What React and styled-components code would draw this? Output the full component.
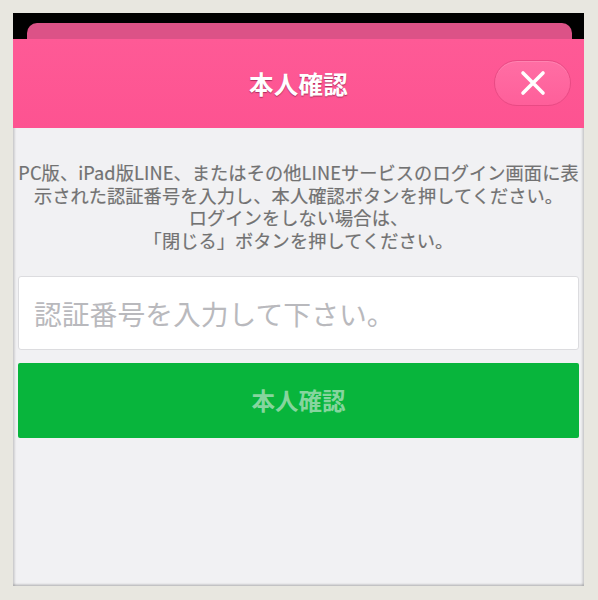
import styled, { createGlobalStyle } from "styled-components";

const Global = createGlobalStyle`
  html, body {
    margin: 0;
    padding: 0;
    background: #e8e7e0;
  }
  body {
    font-family: "Noto Sans CJK JP", "Noto Sans", Roboto, sans-serif;
  }
`;

const Page = styled.div`
  width: 598px;
  height: 600px;
  padding: 13px 14px 14px 13px;
  box-sizing: border-box;
`;

const Frame = styled.div`
  height: 573px;
  background: #f1f1f3;
  display: flex;
  flex-direction: column;
  box-shadow: inset 2px 0 2px rgba(0, 0, 0, 0.12), inset -2px 0 2px rgba(0, 0, 0, 0.12),
    inset 0 -2px 2px rgba(0, 0, 0, 0.14);
  overflow: hidden;
`;

const TopStrip = styled.div`
  background: #000;
  height: 26px;
  padding: 10px 12px 0 14px;
  box-sizing: border-box;
  display: flex;
`;

const BackCard = styled.div`
  flex: 1;
  background: #dc5287;
  border-radius: 10px 10px 0 0;
`;

const Header = styled.div`
  height: 89px;
  background: linear-gradient(#fe5a96, #fd5391);
  display: flex;
  align-items: center;
  justify-content: center;
  position: relative;
`;

const Title = styled.h1`
  margin: 0;
  font-size: 24.5px;
  font-weight: 700;
  color: #fff;
  letter-spacing: 0.3px;
  text-shadow: 0 1px 1px rgba(120, 20, 60, 0.6);
`;

const Close = styled.button`
  position: absolute;
  right: 13px;
  top: 21px;
  width: 77px;
  height: 46px;
  border-radius: 23px;
  border: 1px solid #e94a84;
  background: linear-gradient(#ff6ea4, #fe5f9a);
  box-shadow: inset 0 1px 0 rgba(255, 255, 255, 0.15);
  display: flex;
  align-items: center;
  justify-content: center;
  padding: 0;
`;

const Body = styled.div`
  padding: 33px 3px 0;
  display: flex;
  flex-direction: column;
`;

const Message = styled.p`
  margin: 0 0 24px;
  text-align: center;
  font-size: 18.2px;
  line-height: 22.7px;
  color: #727272;
  letter-spacing: 0.1px;
  -webkit-text-stroke: 0.2px #727272;
`;

const Field = styled.input`
  height: 74px;
  box-sizing: border-box;
  margin: 0 2px 13px;
  border: 1px solid #dcdcdf;
  border-radius: 3px;
  background: #fff;
  padding: 0 0 0 15px;
  font-family: inherit;
  font-size: 27.8px;
  outline: none;
  &::placeholder {
    color: #b9b9bd;
  }
`;

const Submit = styled.button`
  height: 75px;
  margin: 0 2px;
  border: none;
  border-radius: 2px;
  background: #08b53c;
  color: #86d59e;
  font-family: inherit;
  font-size: 23.5px;
  font-weight: 700;
`;

const App = () => {
  return (
    <Page>
      <Global />
      <Frame>
        <TopStrip>
          <BackCard />
        </TopStrip>
        <Header>
          <Title>本人確認</Title>
          <Close aria-label="閉じる">
            <svg width="26" height="26" viewBox="0 0 26 26">
              <path d="M3 3 L23 23 M23 3 L3 23" stroke="#fff" strokeWidth="3.6" strokeLinecap="round" />
            </svg>
          </Close>
        </Header>
        <Body>
          <Message>
            PC版、iPad版LINE、またはその他LINEサービスのログイン画面に表
            <br />
            示された認証番号を入力し、本人確認ボタンを押してください。
            <br />
            ログインをしない場合は、
            <br />
            「閉じる」ボタンを押してください。
          </Message>
          <Field placeholder="認証番号を入力して下さい。" />
          <Submit>本人確認</Submit>
        </Body>
      </Frame>
    </Page>
  );
};

export default App;
